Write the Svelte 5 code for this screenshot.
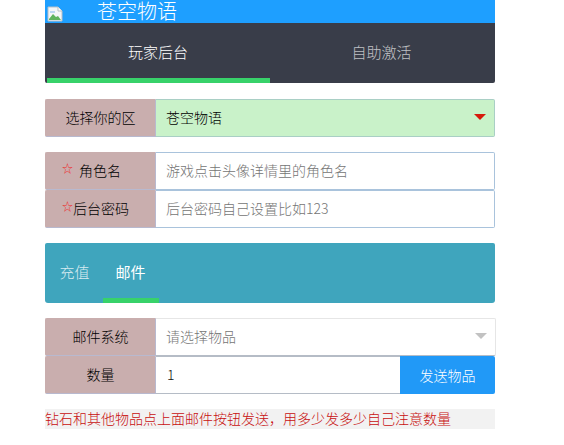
<script>
  const tabs = ['玩家后台', '自助激活'];
</script>

<div class="page">
  <header class="head">
    <svg class="broken" width="16" height="16" viewBox="0 0 16 16" aria-hidden="true">
      <path d="M1 1h10l4 4v10H1z" fill="#f4f6f8" stroke="#b9c0c6" stroke-width="1"/>
      <path d="M11 1v4h4" fill="#fff" stroke="#b9c0c6"/>
      <path d="M2 13l4-5 3 3 2-1 3 4H2z" fill="#5fb45f"/>
      <path d="M3 5h5v2H3z" fill="#bcd6f2"/>
    </svg>
    <span class="title">苍空物语</span>
  </header>

  <nav class="tabs">
    {#each tabs as t, i}
      <div class="tab" class:on={i === 0}>{t}</div>
    {/each}
  </nav>

  <div class="row first">
    <div class="label">选择你的区</div>
    <div class="field green"><span>苍空物语</span><i class="caret red"></i></div>
  </div>

  <section class="group">
    <div class="row">
      <div class="label star"><em class="gap">☆</em>角色名</div>
      <div class="field ph">游戏点击头像详情里的角色名</div>
    </div>
    <div class="row">
      <div class="label star"><em>☆</em>后台密码</div>
      <div class="field ph">后台密码自己设置比如123</div>
    </div>
  </section>

  <nav class="tabs2">
    <div class="t2">充值</div>
    <div class="t2 on">邮件</div>
  </nav>

  <section class="group mail">
    <div class="row">
      <div class="label">邮件系统</div>
      <div class="field ph plain"><span>请选择物品</span><i class="caret grey"></i></div>
    </div>
    <div class="row">
      <div class="label">数量</div>
      <div class="field val">1</div>
      <button class="send">发送物品</button>
    </div>
  </section>

  <p class="note">钻石和其他物品点上面邮件按钮发送，用多少发多少自己注意数量</p>
</div>

<style>
  :global(body) {
    margin: 0;
    background: #fff;
  }
  .page {
    width: 450px;
    margin-left: 45px;
    font-family: "Noto Sans CJK SC", "Liberation Sans", sans-serif;
    font-size: 14px;
    font-weight: 300;
    color: #222;
  }
  .head {
    height: 23px;
    background: #1e9fff;
    display: flex;
    align-items: flex-start;
    color: #fff;
  }
  .broken {
    margin: 6px 0 0 2px;
    flex: none;
    height: 16px;
  }
  .title {
    margin-left: 34px;
    font-size: 20px;
    line-height: 22px;
  }
  .tabs {
    display: flex;
    height: 60px;
    background: #393d49;
    border-radius: 0 0 2px 2px;
  }
  .tab {
    width: 225px;
    box-sizing: border-box;
    text-align: center;
    font-size: 15px;
    line-height: 57px;
    color: rgba(255, 255, 255, 0.7);
  }
  .tab + .tab {
    padding-right: 2px;
  }
  .tab.on {
    color: #fff;
    position: relative;
    padding-left: 1px;
  }
  .tab.on::after {
    content: "";
    position: absolute;
    left: 2px;
    right: 0;
    bottom: 0;
    height: 5px;
    background: #38d26a;
  }
  .row {
    display: flex;
    height: 38px;
  }
  .first {
    margin-top: 16px;
  }
  .group {
    margin-top: 15px;
  }
  .label {
    width: 111px;
    flex: none;
    box-sizing: border-box;
    background: #c9aeae;
    border: 1px solid #b8b9cf;
    border-left-color: #c9aeae;
    border-top-color: #c9aeae;
    border-radius: 2px 0 0 2px;
    text-align: center;
    line-height: 34px;
    color: #000;
  }
  .star {
    text-align: left;
    padding-left: 16px;
  }
  .star em {
    display: inline-block;
    width: 11px;
    color: #f02020;
    font-style: normal;
    font-size: 11px;
    line-height: 1;
    position: relative;
    top: -3px;
  }
  .star em.gap {
    margin-right: 6px;
  }
  .field {
    flex: 1;
    box-sizing: border-box;
    display: flex;
    align-items: center;
    justify-content: space-between;
    padding: 0 8px 2px 10px;
    border: 1px solid #a9c3dc;
    border-left: 0;
    border-radius: 0 2px 2px 0;
    background: #fff;
  }
  .green {
    background: #c9f2c9;
    border-color: #a9cfc5;
    color: #000;
  }
  .ph {
    color: #757575;
  }
  .plain {
    border-color: #e6e6e6;
    border-bottom-color: #b5bcc6;
    margin-right: -1px;
  }
  .val {
    color: #111;
    border-color: #b5bcc6;
    border-right: 0;
    border-radius: 0;
    padding-left: 11px;
  }
  .caret {
    width: 0;
    height: 0;
    border: 6px solid transparent;
    border-bottom: 0;
  }
  .caret.red {
    border-top-color: #d61a0c;
  }
  .caret.grey {
    border-top-color: #c2c2c2;
  }
  .tabs2 {
    margin-top: 15px;
    height: 60px;
    background: #3fa5bd;
    border-radius: 2px 2px 3px 3px;
    display: flex;
  }
  .t2 {
    width: 57px;
    box-sizing: border-box;
    text-align: center;
    font-size: 15px;
    line-height: 58px;
    color: rgba(255, 255, 255, 0.8);
    position: relative;
    padding-left: 2px;
  }
  .t2.on {
    color: #fff;
    font-weight: 400;
    padding-left: 0;
  }
  .t2.on::after {
    content: "";
    position: absolute;
    left: 1px;
    right: 0;
    bottom: 0;
    height: 5px;
    background: #38d26a;
  }
  .mail {
    margin-top: 15px;
  }
  .send {
    width: 95px;
    flex: none;
    border: 0;
    padding: 0;
    background: #2199f7;
    color: #fff;
    font: inherit;
    border-radius: 0 2px 2px 0;
  }
  .note {
    margin: 15px 0 0;
    height: 20px;
    line-height: 19px;
    background: #f2f2f2;
    color: #c80f0f;
    white-space: nowrap;
  }
</style>
